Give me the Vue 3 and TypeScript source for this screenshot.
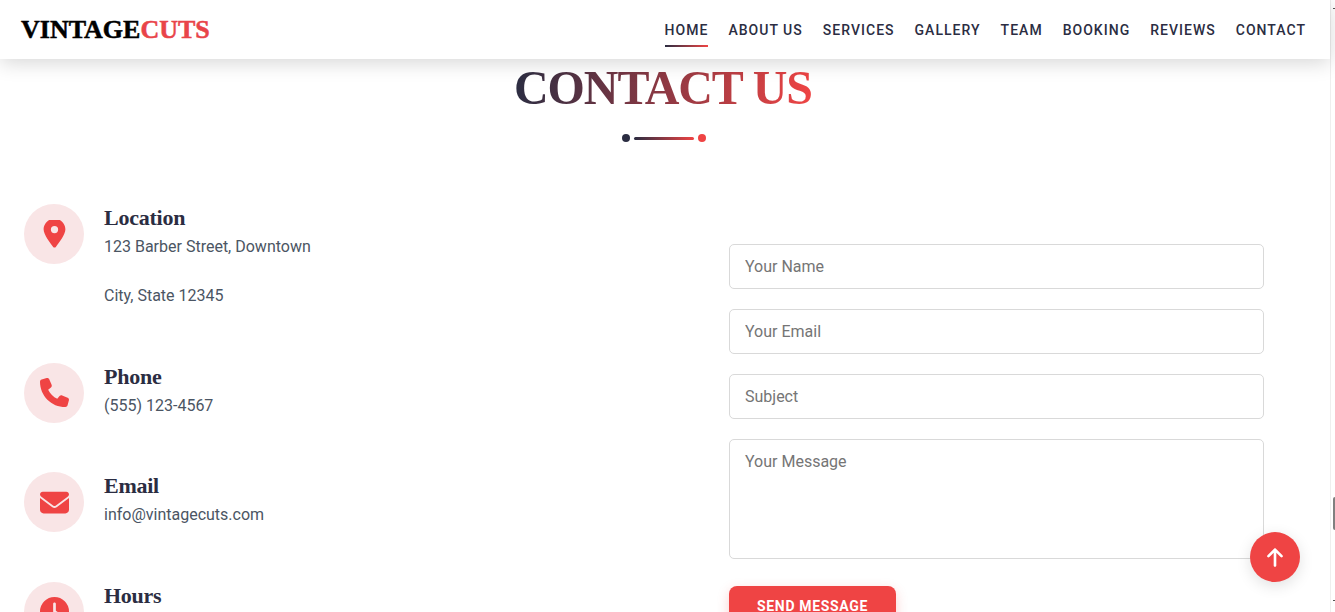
<template>
  <div class="page">
    <header class="navbar">
      <a class="brand">VINTAGE<span>CUTS</span></a>
      <nav class="nav-links">
        <a
          v-for="link in links"
          :key="link"
          class="nav-link"
          :class="{ 'nav-link--active': link === 'Home' }"
        >{{ link }}</a>
      </nav>
    </header>

    <section class="contact">
      <h2 class="contact__title">CONTACT US</h2>
      <div class="divider">
        <i class="divider__dot divider__dot--dark"></i>
        <i class="divider__line"></i>
        <i class="divider__dot divider__dot--red"></i>
      </div>

      <div class="contact__grid">
        <div class="info">
          <div v-for="item in infoItems" :key="item.title" class="info__item">
            <div class="info__icon">
              <svg :viewBox="item.box" width="29" height="29" fill="#ef4444">
                <path :d="item.icon" />
              </svg>
            </div>
            <div class="info__text">
              <h3>{{ item.title }}</h3>
              <p v-for="line in item.lines" :key="line">{{ line }}</p>
            </div>
          </div>
        </div>

        <form class="form" @submit.prevent>
          <input class="field" type="text" placeholder="Your Name" />
          <input class="field" type="email" placeholder="Your Email" />
          <input class="field" type="text" placeholder="Subject" />
          <textarea class="field field--area" placeholder="Your Message"></textarea>
          <button class="send" type="submit">SEND MESSAGE</button>
        </form>
      </div>
    </section>

    <button class="to-top" type="button" aria-label="Back to top">
      <svg viewBox="0 0 384 512" width="16" height="21" fill="#fff">
        <path d="M214.600 41.400c-12.500-12.500-32.800-12.500-45.300 0l-160 160c-12.500 12.500-12.500 32.800 0 45.300s32.800 12.500 45.300 0L160 141.200V448c0 17.700 14.300 32 32 32s32-14.300 32-32V141.200L329.400 246.600c12.500 12.500 32.800 12.500 45.300 0s12.500-32.800 0-45.300l-160-160z" />
      </svg>
    </button>

    <div class="scroll-mark">
      <i class="scroll-mark__thumb"></i>
    </div>
  </div>
</template>

<script setup lang="ts">
interface InfoItem {
  title: string
  lines: string[]
  icon: string
  box: string
}

const links = ['Home', 'About Us', 'Services', 'Gallery', 'Team', 'Booking', 'Reviews', 'Contact']

const infoItems: InfoItem[] = [
  {
    title: 'Location',
    lines: ['123 Barber Street, Downtown', 'City, State 12345'],
    box: '-64 24 512 512',
    icon: 'M215.700 499.200C267 435 384 279.400 384 192C384 86 298 0 192 0S0 86 0 192c0 87.400 117 243 168.300 307.200c12.300 15.300 35.100 15.300 47.400 0zM192 128a64 64 0 1 1 0 128 64 64 0 1 1 0-128z',
  },
  {
    title: 'Phone',
    lines: ['(555) 123-4567'],
    box: '0 0 512 512',
    icon: 'M164.900 24.600c-7.700-18.600-28-28.500-47.400-23.200l-88 24C12.100 30.200 0 46 0 64c0 247.400 200.600 448 448 448 18 0 33.800-12.100 38.600-29.500l24-88c5.300-19.400-4.600-39.700-23.200-47.400l-96-40c-16.300-6.800-35.200-2.100-46.300 11.600L304.700 368c-70.400-33.300-127.400-90.300-160.700-160.700l49.300-40.300c13.700-11.200 18.400-30 11.600-46.300l-40-96z',
  },
  {
    title: 'Email',
    lines: ['info@vintagecuts.com'],
    box: '0 0 512 512',
    icon: 'M48 64C21.500 64 0 85.500 0 112c0 15.100 7.100 29.300 19.200 38.400L236.800 313.600c11.400 8.500 27 8.500 38.400 0L492.800 150.400c12.100-9.100 19.200-23.300 19.200-38.400 0-26.500-21.500-48-48-48H48zM0 176V384c0 35.300 28.700 64 64 64H448c35.300 0 64-28.700 64-64V176L294.400 339.200c-22.800 17.100-54 17.100-76.800 0L0 176z',
  },
  {
    title: 'Hours',
    lines: [],
    box: '0 0 512 512',
    icon: 'M256 0a256 256 0 1 1 0 512A256 256 0 1 1 256 0zM232 120V256c0 8 4 15.500 10.700 20l96 64c11 7.400 25.900 4.400 33.300-6.700s4.400-25.900-6.700-33.300L280 243.200V120c0-13.300-10.700-24-24-24s-24 10.700-24 24z',
  },
]
</script>

<style>
html,
body {
  margin: 0;
  height: 612px;
  overflow: hidden;
  background: #fff;
}
</style>

<style scoped>
.page {
  position: relative;
  height: 612px;
  overflow: hidden;
  font-family: Roboto, 'Liberation Sans', sans-serif;
  color: #2b2d42;
  background: #fff;
}

.navbar {
  position: relative;
  z-index: 2;
  box-sizing: border-box;
  display: flex;
  align-items: center;
  justify-content: space-between;
  width: 1330px;
  height: 59px;
  padding: 0 24px 0 21px;
  background: #fff;
  box-shadow: 0 4px 20px rgba(0, 0, 0, 0.16);
}

.brand {
  font-family: 'Liberation Serif', serif;
  font-size: 26px;
  font-weight: 700;
  color: #000;
  -webkit-text-stroke: 0.5px currentColor;
}

.brand span {
  color: #e94449;
}

.nav-links {
  display: flex;
  gap: 20px;
}

.nav-link {
  position: relative;
  padding: 8px 0;
  font-size: 14px;
  font-weight: 500;
  line-height: 18px;
  letter-spacing: 1.02px;
  text-transform: uppercase;
  color: #2b2d42;
}

.nav-link--active::after {
  content: '';
  position: absolute;
  left: 0;
  right: 0;
  bottom: 0;
  height: 2px;
  background: linear-gradient(90deg, #2b2d42, #ef4444);
}

.contact {
  width: 1326px;
}

.contact__title {
  width: max-content;
  margin: 3px auto 0;
  font-family: 'Liberation Serif', serif;
  font-size: 48px;
  font-weight: 700;
  line-height: 52px;
  padding-bottom: 2px;
  letter-spacing: -1.1px;
  background: linear-gradient(90deg, #2b2d42, #ef4444);
  -webkit-background-clip: text;
  background-clip: text;
  color: transparent;
}

.divider {
  display: flex;
  align-items: center;
  justify-content: center;
  gap: 4px;
  margin-top: 18px;
  padding-left: 2px;
}

.divider__dot {
  width: 8px;
  height: 8px;
  border-radius: 50%;
}

.divider__dot--dark {
  background: #2b2d42;
}

.divider__dot--red {
  background: #ef4444;
}

.divider__line {
  width: 60px;
  height: 3px;
  border-radius: 2px;
  background: linear-gradient(90deg, #2b2d42, #ef4444);
}

.contact__grid {
  display: grid;
  grid-template-columns: 705px 535px;
  margin-top: 62px;
  padding-left: 24px;
}

.info__item {
  display: flex;
  gap: 20px;
  margin-bottom: 38.6px;
}

.info__icon {
  flex: none;
  display: flex;
  align-items: center;
  justify-content: center;
  width: 60px;
  height: 60px;
  border-radius: 50%;
  background: #f9e5e6;
}

.info__text h3 {
  margin: 0;
  font-family: 'Liberation Serif', serif;
  font-size: 22px;
  font-weight: 700;
  line-height: 28px;
  padding-bottom: 3px;
  letter-spacing: -0.25px;
  color: #2b2d42;
}

.info__text p {
  margin: 0 0 25px;
  font-size: 16px;
  line-height: 24px;
  color: #4b5563;
}

.info__text p:last-child {
  margin-bottom: 16px;
}

.form {
  display: flex;
  flex-direction: column;
  align-items: flex-start;
  padding-top: 40px;
}

.field {
  box-sizing: border-box;
  display: block;
  width: 535px;
  height: 45px;
  margin-bottom: 20px;
  padding: 0 15px;
  border: 1px solid #d9d9d9;
  border-radius: 5px;
  background: #fff;
  font-family: Roboto, 'Liberation Sans', sans-serif;
  font-size: 16px;
  color: #2b2d42;
  outline: none;
}

.field::placeholder {
  color: #757575;
  opacity: 1;
}

.field--area {
  height: 120px;
  padding-top: 12px;
  margin-bottom: 27px;
  resize: none;
}

.send {
  flex: none;
  height: 40px;
  padding: 0 28px;
  border: 0;
  border-radius: 8px;
  background: #ef4444;
  color: #fff;
  font-family: Roboto, 'Liberation Sans', sans-serif;
  font-size: 14px;
  font-weight: 700;
  letter-spacing: 0.67px;
  box-shadow: 0 4px 12px rgba(239, 68, 68, 0.25);
}

.to-top {
  position: absolute;
  left: 1250px;
  top: 532px;
  display: flex;
  align-items: center;
  justify-content: center;
  width: 50px;
  height: 50px;
  padding: 0;
  border: 0;
  border-radius: 50%;
  background: #ef4444;
  box-shadow: 0 4px 15px rgba(0, 0, 0, 0.12);
}

.scroll-mark {
  position: absolute;
  top: 0;
  right: 0;
  box-sizing: border-box;
  width: 5px;
  height: 612px;
  border-left: 1px solid #efefef;
}

.scroll-mark::before,
.scroll-mark::after {
  content: '';
  position: absolute;
  right: 0;
  width: 2px;
  height: 1px;
  background: #555;
}

.scroll-mark::before {
  top: 8px;
}

.scroll-mark::after {
  top: 600px;
}

.scroll-mark__thumb {
  position: absolute;
  top: 497px;
  right: 0;
  width: 2px;
  height: 33px;
  border-radius: 2px 0 0 2px;
  background: #808080;
}
</style>
